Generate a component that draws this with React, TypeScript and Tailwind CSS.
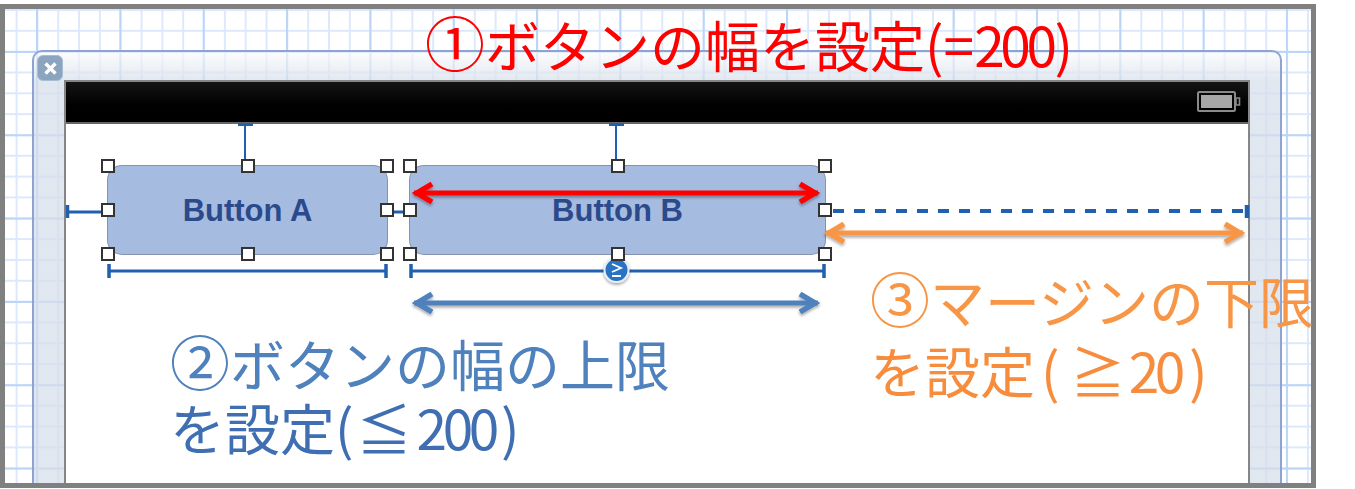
const handleSpots = [
  "left-0 top-0",
  "left-1/2 top-0",
  "left-full top-0",
  "left-0 top-1/2",
  "left-full top-1/2",
  "left-0 top-full",
  "left-1/2 top-full",
  "left-full top-full",
];

function Battery() {
  return (
    <svg width="46" height="24" viewBox="0 0 46 24" className="mr-[5px]">
      <rect x="1" y="2" width="37" height="19" rx="1.5" fill="none" stroke="#8a8a8a" strokeWidth="2" />
      <rect x="4" y="5" width="31" height="13" fill="#a8a8a8" />
      <path d="M39 8h3.5v7H39z" fill="none" stroke="#8a8a8a" strokeWidth="1.6" />
    </svg>
  );
}

function Button({ label, width }: { label: string; width: string }) {
  return (
    <div
      className={`${width} relative z-10 h-[88px] rounded-[14px] bg-[#a6bbe0] shadow-[0_0_0_1px_#8593ae] flex items-center justify-center pt-[2px] text-[31px] font-bold text-[#2b4a8c] font-['Liberation_Sans',sans-serif]`}
    >
      {label}
      {handleSpots.map((spot) => (
        <div
          key={spot}
          className={`${spot} absolute w-[14px] h-[14px] -translate-x-1/2 -translate-y-1/2 bg-white border-2 border-[#333333]`}
        />
      ))}
    </div>
  );
}

function Arrow({ x1, x2, y, color }: { x1: number; x2: number; y: number; color: string }) {
  return (
    <g stroke={color} fill="none" strokeWidth="5" filter="url(#soft)">
      <path d={`M${x1} ${y}H${x2}`} />
      <path d={`M${x1 + 18} ${y - 9}L${x1 + 3} ${y}L${x1 + 18} ${y + 9}`} strokeWidth="5.5" />
      <path d={`M${x2 - 18} ${y - 9}L${x2 - 3} ${y}L${x2 - 18} ${y + 9}`} strokeWidth="5.5" />
    </g>
  );
}

function Constraints() {
  return (
    <svg className="absolute left-0 top-0 z-[5]" width="1355" height="489" viewBox="0 0 1355 489">
      <defs>
        <filter id="bubble" x="-40%" y="-40%" width="180%" height="180%">
          <feDropShadow dx="0" dy="1.5" stdDeviation="1.5" floodColor="#000000" floodOpacity="0.4" />
        </filter>
      </defs>
      <g stroke="#2060ae" fill="none">
        <path d="M245 123V166" strokeWidth="2" />
        <path d="M238 124.5H253" strokeWidth="3" />
        <path d="M616 123V166" strokeWidth="2" />
        <path d="M609 124.5H624" strokeWidth="3" />
        <path d="M67 212H108" strokeWidth="3" />
        <path d="M67.5 205V218" strokeWidth="3.5" />
        <path d="M388 212H410" strokeWidth="3" />
        <path d="M109 271H386" strokeWidth="3" />
        <path d="M109 264V278M386 264V278" strokeWidth="3.5" />
        <path d="M411 271H824" strokeWidth="3" />
        <path d="M411 264V278M824 264V278" strokeWidth="3.5" />
        <path d="M833 211H1247" strokeWidth="4" strokeDasharray="11 10" />
        <path d="M1247 205V218" strokeWidth="4.5" />
      </g>
      <circle cx="616.5" cy="270" r="12" fill="#2a72c4" stroke="#e8eef6" strokeWidth="2" filter="url(#bubble)" />
      <path d="M612 264L621 268L612 272M612 276H621" stroke="#ffffff" strokeWidth="1.8" fill="none" />
    </svg>
  );
}

function Arrows() {
  return (
    <svg className="absolute left-0 top-0 z-20" width="1355" height="489" viewBox="0 0 1355 489">
      <defs>
        <filter id="soft" x="-5%" y="-100%" width="110%" height="300%">
          <feDropShadow dx="0" dy="2" stdDeviation="1.5" floodColor="#000000" floodOpacity="0.35" />
        </filter>
      </defs>
      <Arrow x1={414} x2={818} y={193} color="#ff0000" />
      <Arrow x1={826} x2={1243} y={233} color="#f79646" />
      <Arrow x1={414} x2={818} y={303} color="#4f81bd" />
    </svg>
  );
}

export default function App() {
  return (
    <div className="relative w-[1355px] h-[489px] overflow-hidden bg-white pt-[4px] font-['Noto_Sans_CJK_JP',sans-serif]">
      {/* blueprint frame */}
      <div className="w-[1316px] h-[484px] border-[5px] border-[#808080] pl-[27px] pt-[41px] bg-white bg-[linear-gradient(to_right,#bcd5f7_2px,transparent_2px),linear-gradient(to_bottom,#bcd5f7_2px,transparent_2px),linear-gradient(to_right,#dce9fd_2px,transparent_2px),linear-gradient(to_bottom,#dce9fd_2px,transparent_2px)] [background-size:83.33px_83.33px,83.33px_83.33px,20.83px_20.83px,20.83px_20.83px] [background-position:31px_42px,31px_42px,10.6px_0px,10.6px_0px]">
        {/* window */}
        <div className="relative w-[1250px] h-full rounded-t-[10px] border-t-2 border-x-2 border-[#8ea3d3] px-[30px] pt-[28px] bg-[linear-gradient(rgba(250,251,253,0.65),rgba(214,222,234,0.72)_30px)]">
          <div className="absolute left-[3px] top-[3px] w-[26px] h-[26px] rounded-[6px] bg-[#8ba4bf] border border-[#a9bdd2] flex items-center justify-center">
            <svg width="15" height="15" viewBox="0 0 15 15">
              <path d="M2.5 2.5L12.5 12.5M12.5 2.5L2.5 12.5" stroke="#ffffff" strokeWidth="3.4" />
            </svg>
          </div>
          {/* phone view */}
          <div className="h-full border-x-2 border-t-2 border-[#868686] bg-white">
            <div className="h-[42px] border-b-2 border-[#666666] bg-[linear-gradient(#141414,#000000_60%)] flex items-center justify-end">
              <Battery />
            </div>
            <div className="flex gap-[23px] pl-[42px] pt-[42px]">
              <Button label="Button A" width="w-[279px]" />
              <Button label="Button B" width="w-[415px]" />
            </div>
          </div>
        </div>
      </div>

      <Constraints />
      <Arrows />

      {/* annotations */}
      <div className="absolute z-30 left-[425px] top-[3px] text-[55px] leading-[80px] whitespace-nowrap text-[#ff0000]">
        <span className="text-[60px] leading-none">①</span>ボタンの幅を設定(=<span className="tracking-[-0.08em]">200</span>
        <span className="ml-[2px]">)</span>
      </div>
      <div className="absolute z-30 left-[170px] top-[330px] text-[55px] leading-[64px] whitespace-nowrap text-[#4f81bd]">
        <span className="text-[60px] leading-none">②</span>ボタンの幅の上限
        <br />
        <span className="text-[#3f6fb2]">
          を設定(<span className="ml-[3px]">≦</span>
          <span className="ml-[5px] tracking-[-0.08em]">200</span>
          <span className="ml-[6px]">)</span>
        </span>
      </div>
      <div className="absolute z-30 left-[870px] top-[264px] text-[55px] leading-[70px] whitespace-nowrap text-[#f79646]">
        <span className="text-[60px] leading-none">③</span>マージンの下限
        <br />
        <span className="text-[#f68c3c]">
          を設定<span className="ml-[6px]">(</span>
          <span className="ml-[11px]">≧</span>
          <span className="ml-[3px] tracking-[-0.08em]">20</span>
          <span className="ml-[8px]">)</span>
        </span>
      </div>
    </div>
  );
}
